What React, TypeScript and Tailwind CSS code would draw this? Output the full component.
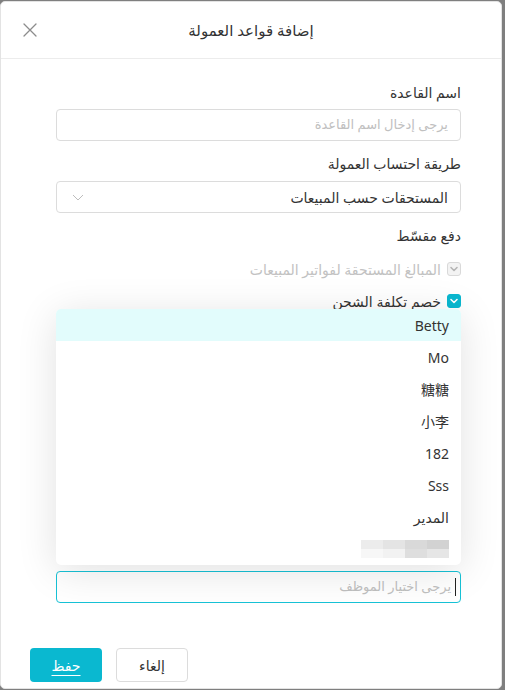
import React from "react";

const font = { fontFamily: '"Noto Sans", "DejaVu Sans", "Noto Sans CJK SC", sans-serif' };

function Check({ disabled }: { disabled?: boolean }) {
  return (
    <span
      className={
        "inline-flex items-center justify-center w-[14px] h-[14px] rounded-[3px] border " +
        (disabled ? "bg-[#f3f3f3] border-[#d9d9d9]" : "bg-[#0ab8d0] border-[#0ab8d0]")
      }
    >
      <svg width="12" height="12" viewBox="0 0 12 12" fill="none">
        <polyline
          points="3,4.5 6,7.5 9,4.5"
          stroke={disabled ? "#b5b5b5" : "#ffffff"}
          strokeWidth="1.6"
          strokeLinecap="round"
          strokeLinejoin="round"
        />
      </svg>
    </span>
  );
}

export default function App() {
  const items = ["Mo", "糖糖", "小李", "182", "Sss", "المدير"];
  return (
    <div className="w-[505px] h-[690px] bg-[#7f7f7f] pt-px overflow-hidden" style={font}>
      <div className="w-[502px] h-[688px] bg-white rounded-[5px] border border-[#e3e3e3] flex flex-col">
        <div className="h-[57px] border-b border-[#ececec] flex items-center justify-center relative">
          <button className="absolute left-[20px] top-[19px] text-[#8a8a8a]">
            <svg width="18" height="18" viewBox="0 0 18 18" fill="none">
              <path d="M3 3L15 15M15 3L3 15" stroke="#8c8c8c" strokeWidth="1.3" strokeLinecap="round" />
            </svg>
          </button>
          <span dir="rtl" className="text-[15px] text-[#333] mt-[1px]">إضافة قواعد العمولة</span>
        </div>

        <div dir="rtl" className="flex-1 pr-[40px] pl-[55px] pt-[23px] text-[14px] text-[#333]">
          <div className="leading-[22px]">اسم القاعدة</div>
          <div className="mt-[5px] h-[32px] border border-[#dcdcdc] rounded-[4px] flex items-center px-[12px] text-[#c0c0c0] text-[13px]">
            يرجى إدخال اسم القاعدة
          </div>

          <div className="mt-[12px] leading-[22px]">طريقة احتساب العمولة</div>
          <div className="mt-[6px] h-[32px] border border-[#dcdcdc] rounded-[4px] flex items-center justify-between px-[12px]">
            <span>المستحقات حسب المبيعات</span>
            <svg width="14" height="14" viewBox="0 0 14 14" fill="none" className="ml-[2px]">
              <polyline points="2,5 7,10 12,5" stroke="#bdbdbd" strokeWidth="1" fill="none" />
            </svg>
          </div>

          <div className="mt-[12px] leading-[22px]">دفع مقسّط</div>
          <div className="mt-[11px] flex items-center gap-[6px] h-[22px]">
            <Check disabled />
            <span className="text-[#c2c2c2]">المبالغ المستحقة لفواتير المبيعات</span>
          </div>
          <div className="mt-[10px] flex items-center gap-[6px] h-[22px]">
            <Check />
            <span>خصم تكلفة الشحن</span>
          </div>

          <div className="relative mt-[259px]">
            <div className="absolute bottom-full mb-[6px] left-0 right-0 h-[256px] bg-white rounded-[5px] shadow-[0_6px_40px_rgba(0,0,0,0.12)] overflow-hidden">
              <div className="h-[32px] bg-[#e2fcfc] flex items-center px-[12px] text-[#333]">Betty</div>
              {items.map((t) => (
                <div key={t} className="h-[32px] flex items-center px-[12px] text-[#333]">
                  {t}
                </div>
              ))}
              <div className="h-[32px] flex items-center px-[12px]">
                <div className="flex flex-col">
                  <div className="flex h-[9px]">
                    <div className="w-[22px] bg-[#d2d2d2]" />
                    <div className="w-[22px] bg-[#d9d9d9]" />
                    <div className="w-[22px] bg-[#e4e4e4]" />
                    <div className="w-[22px] bg-[#ececec]" />
                  </div>
                  <div className="flex h-[9px]">
                    <div className="w-[22px] bg-[#e6e6e6]" />
                    <div className="w-[22px] bg-[#dedede]" />
                    <div className="w-[22px] bg-[#f2f2f2]" />
                    <div className="w-[22px] bg-[#f7f7f7]" />
                  </div>
                </div>
              </div>
            </div>
            <div className="h-[32px] border border-[#17c2d6] rounded-[4px] flex items-center px-[4px] text-[#c0c0c0] text-[13px]">
              <span className="w-px h-[18px] bg-[#222] ml-[4px]" />
              يرجى اختيار الموظف
            </div>
          </div>
        </div>

        <div className="flex gap-[14px] pl-[29px] pb-[6px]">
          <button className="w-[72px] h-[34px] rounded-[4px] bg-[#0ab8d0] text-white text-[14px] underline decoration-1 underline-offset-[4px]">
            حفظ
          </button>
          <button className="w-[72px] h-[34px] rounded-[4px] border border-[#dcdcdc] bg-white text-[#333] text-[14px]">
            إلغاء
          </button>
        </div>
      </div>
    </div>
  );
}
